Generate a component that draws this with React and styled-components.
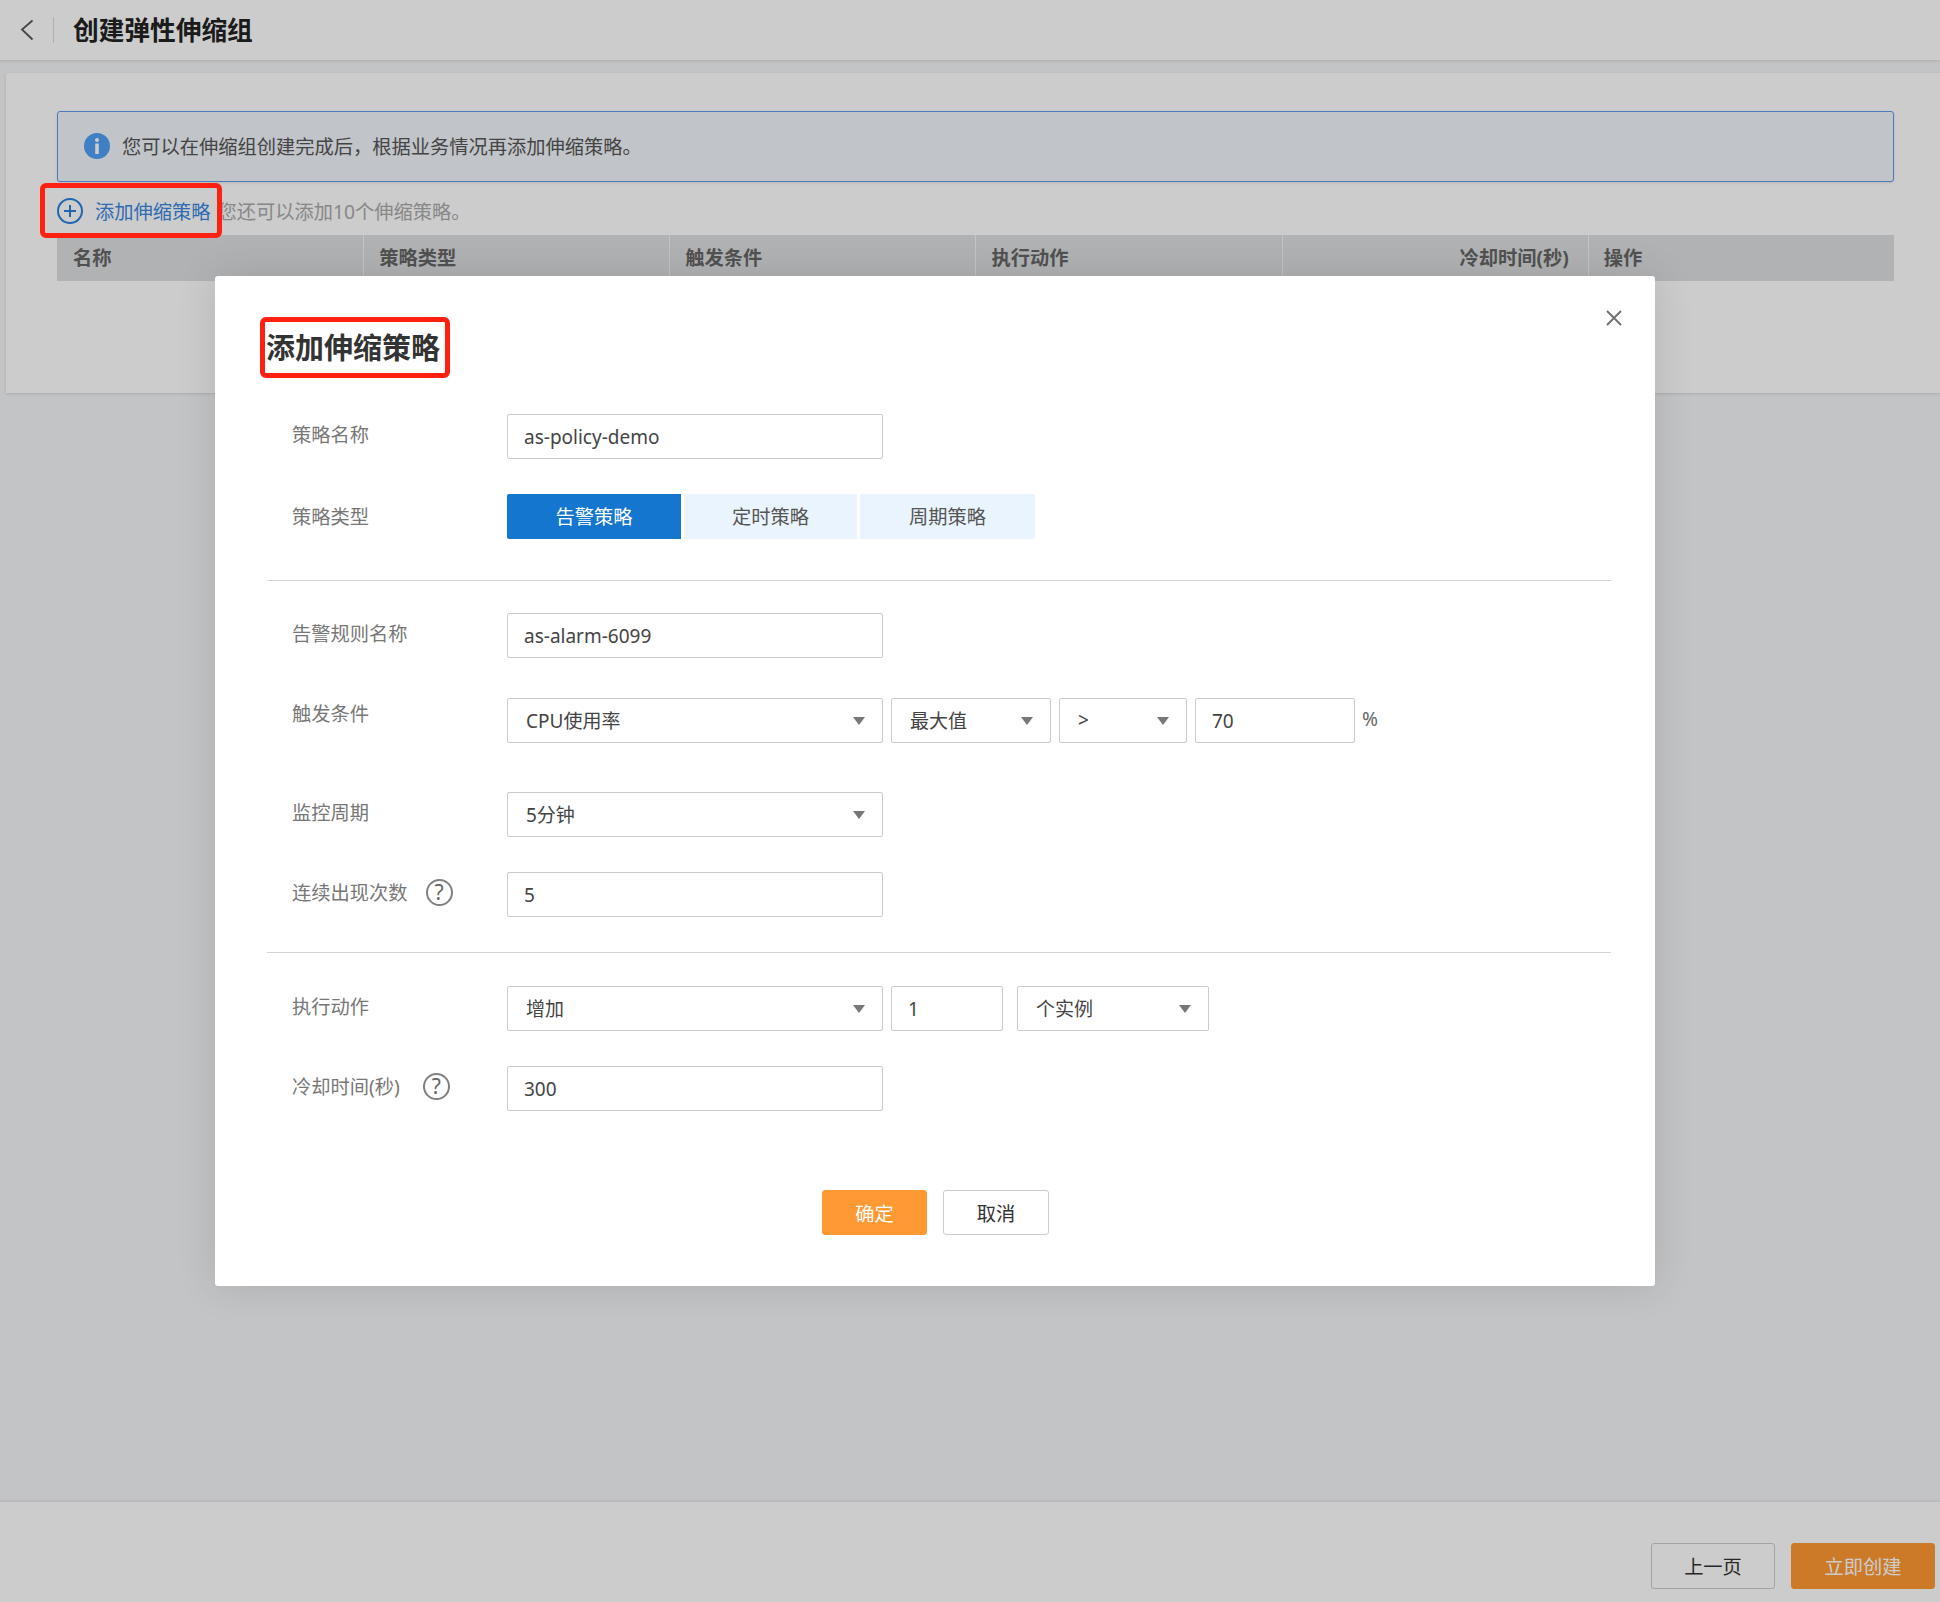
import React from 'react';
import styled, { createGlobalStyle } from 'styled-components';

const Global = createGlobalStyle`
  html, body { margin: 0; padding: 0; background: #f4f5f7; }
  body { font-family: "Noto Sans", "Noto Sans CJK SC", sans-serif; font-size: 19.25px; color: #444; }
  * { box-sizing: border-box; }
`;

const Page = styled.div`
  position: relative;
  width: 1940px;
  height: 1602px;
  display: flex;
  flex-direction: column;
  overflow: hidden;
  background: #f4f5f7;
`;
const Header = styled.header`
  height: 60px;
  flex: none;
  background: #fff;
  display: flex;
  align-items: center;
  box-shadow: 0 1px 3px rgba(0,0,0,.12);
  padding-left: 18px;
`;
const BackDivider = styled.span`
  width: 1px;
  height: 26px;
  background: #ddd;
  margin: 0 19px 0 17px;
`;
const PageTitle = styled.h1`
  margin: 2px 0 0;
  font-size: 25.7px;
  font-weight: 700;
  color: #222;
  line-height: 1;
`;
const Panel = styled.section`
  margin: 13px 0 0 6px;
  height: 320px;
  flex: none;
  background: #fff;
  padding: 38px 46px 0 51px;
  box-shadow: 0 1px 3px rgba(0,0,0,.12);
`;
const InfoBox = styled.div`
  height: 71px;
  display: flex;
  align-items: center;
  gap: 12px;
  padding: 0 0 2px 26px;
  background: #f2f6fc;
  border: 1px solid #5d9ced;
  border-radius: 3px;
  box-shadow: 0 1px 3px rgba(0,0,0,.1);
  color: #555;
`;
const Toolbar = styled.div`
  height: 53px;
  display: flex;
  align-items: center;
  padding-top: 5px;
`;
const AddLink = styled.a`
  position: relative;
  display: flex;
  align-items: center;
  gap: 12px;
  color: #3a86e0;
`;
const Marker = styled.span`
  position: absolute;
  left: -17px;
  top: -14px;
  width: 182px;
  height: 55px;
  border: 5px solid #ff2011;
  border-radius: 6px;
  z-index: 30;
`;
const Hint = styled.span`
  color: #aaa;
  margin-left: 7px;
`;
const TableHead = styled.div`
  display: grid;
  grid-template-columns: repeat(6, 1fr);
  height: 46px;
  background: #dcdfe1;
`;
const HeadCell = styled.div`
  display: flex;
  align-items: center;
  padding: 0 ${p => (p.$right ? '19px' : '16px')} 2px ${p => (p.$first ? '16px' : '15px')};
  font-weight: 700;
  color: #666;
  border-left: ${p => (p.$first ? 'none' : '1px solid #f4f5f7')};
  justify-content: ${p => (p.$right ? 'flex-end' : 'flex-start')};
`;
const Spacer = styled.div`
  flex: 1;
`;
const Footer = styled.footer`
  height: 100px;
  flex: none;
  background: #fff;
  box-shadow: 0 -1px 3px rgba(0,0,0,.1);
  display: flex;
  justify-content: flex-end;
  gap: 16px;
  padding: 41px 5px 0 0;
`;
const Button = styled.button`
  width: ${p => p.$w}px;
  height: ${p => p.$h}px;
  font: inherit;
  padding: 0;
  border-radius: 3px;
  cursor: pointer;
  color: ${p => (p.$primary ? '#fff' : '#333')};
  background: ${p => (p.$primary ? '#ff9933' : '#fff')};
  border: 1px solid ${p => (p.$primary ? '#ff9933' : '#ccc')};
`;
const Overlay = styled.div`
  position: absolute;
  inset: 0;
  background: rgba(0,0,0,.2);
  z-index: 10;
`;
const Modal = styled.div`
  position: absolute;
  left: 215px;
  top: 276px;
  width: 1440px;
  height: 1010px;
  background: #fff;
  border-radius: 3px;
  padding: 41px 44px 0 45px;
  box-shadow: 0 0 40px rgba(0,0,0,.12);
  z-index: 20;
`;
const CloseBtn = styled.span`
  position: absolute;
  top: 33px;
  right: 32px;
  width: 18px;
  height: 18px;
  display: block;
  line-height: 0;
`;
const ModalTitle = styled.h2`
  margin: 0;
  display: block;
  width: 190px;
  height: 61px;
  border: 5px solid #ff2011;
  border-radius: 6px;
  font-size: 29px;
  font-weight: 700;
  color: #333;
  line-height: 51px;
  white-space: nowrap;
  padding-left: 1px;
`;
const Row = styled.div`
  display: flex;
  align-items: flex-start;
  margin-top: ${p => p.$top}px;
  padding-left: 32px;
`;
const Label = styled.div`
  width: 215px;
  flex: none;
  display: flex;
  align-items: center;
  color: #777;
  height: ${p => p.$lh || 42}px;
  line-height: ${p => p.$lh || 42}px;
  white-space: nowrap;
`;
const Help = styled.span`
  width: 27px;
  height: 27px;
  flex: none;
  margin-left: ${p => p.$gap}px;
  margin-top: -2px;
  border: 2px solid #808080;
  border-radius: 50%;
  display: flex;
  align-items: center;
  justify-content: center;
  font-size: 21px;
  line-height: 1;
  color: #666;
`;
const Controls = styled.div`
  display: flex;
  align-items: center;
`;
const Field = styled.div`
  width: ${p => p.$w}px;
  margin-left: ${p => p.$gap || 0}px;
  height: 45px;
  flex: none;
  display: flex;
  align-items: center;
  padding-left: 16px;
  font-size: 19px;
  background: #fff;
  border: 1px solid #ccc;
  border-bottom-width: 1.5px;
  border-radius: 2px;
  color: #444;
`;
const SelectBox = styled(Field)`
  position: relative;
  padding: 0 0 2px 18px;
  &::after {
    content: '';
    position: absolute;
    right: 17px;
    top: 18px;
    border-left: 6px solid transparent;
    border-right: 6px solid transparent;
    border-top: 8px solid #777;
  }
`;
const Unit = styled.span`
  margin: 0 0 4px 7px;
  color: #666;
`;
const SegGroup = styled.div`
  display: flex;
  gap: 3px;
`;
const Seg = styled.div`
  width: ${p => p.$w}px;
  height: 45px;
  display: flex;
  align-items: center;
  justify-content: center;
  padding-bottom: 2px;
  color: ${p => (p.$active ? '#fff' : '#555')};
  background: ${p => (p.$active ? '#1476ce' : '#eaf4fe')};
  border-radius: ${p => p.$radius || '0'};
`;
const Divider = styled.hr`
  margin: ${p => p.$top}px 0 0 7px;
  border: 0;
  height: 1px;
  background: #d4d4d4;
`;
const ModalActions = styled.div`
  display: flex;
  margin-top: 79px;
  padding-left: 562px;
  gap: 16px;
`;

const Chevron = () => (
  <svg width="18" height="26" viewBox="0 0 18 26" fill="none" stroke="#555" strokeWidth="1.8">
    <path d="M14.5 3.5 L4 12.5 L14.5 22.5" />
  </svg>
);
const InfoIcon = () => (
  <svg width="26" height="26" viewBox="0 0 26 26">
    <circle cx="13" cy="13" r="13" fill="#4f9ff5" />
    <circle cx="13" cy="7" r="2" fill="#fff" />
    <rect x="11.2" y="10.5" width="3.6" height="10.5" fill="#fff" />
  </svg>
);
const PlusIcon = () => (
  <svg width="26" height="26" viewBox="0 0 26 26" fill="none" stroke="#2b7fdc" strokeWidth="2">
    <circle cx="13" cy="13" r="12" />
    <path d="M13 7 V19 M7 13 H19" />
  </svg>
);
const CloseIcon = () => (
  <svg width="18" height="18" viewBox="0 0 18 18" fill="none" stroke="#6e6e6e" strokeWidth="1.8">
    <path d="M2 2 L16 16 M16 2 L2 16" />
  </svg>
);

export default function App() {
  return (
    <Page>
      <Global />
      <Header>
        <Chevron />
        <BackDivider />
        <PageTitle>创建弹性伸缩组</PageTitle>
      </Header>
      <Panel>
        <InfoBox>
          <InfoIcon />
          <span>您可以在伸缩组创建完成后，根据业务情况再添加伸缩策略。</span>
        </InfoBox>
        <Toolbar>
          <AddLink>
            <PlusIcon />
            <span>添加伸缩策略</span>
            <Marker />
          </AddLink>
          <Hint>您还可以添加10个伸缩策略。</Hint>
        </Toolbar>
        <TableHead>
          <HeadCell $first>名称</HeadCell>
          <HeadCell>策略类型</HeadCell>
          <HeadCell>触发条件</HeadCell>
          <HeadCell>执行动作</HeadCell>
          <HeadCell $right>冷却时间(秒)</HeadCell>
          <HeadCell>操作</HeadCell>
        </TableHead>
      </Panel>
      <Spacer />
      <Footer>
        <Button $w={124} $h={46}>上一页</Button>
        <Button $w={144} $h={46} $primary>立即创建</Button>
      </Footer>
      <Overlay />
      <Modal>
        <CloseBtn><CloseIcon /></CloseBtn>
        <ModalTitle>添加伸缩策略</ModalTitle>
        <Row $top={36}>
          <Label>策略名称</Label>
          <Controls><Field $w={376}>as-policy-demo</Field></Controls>
        </Row>
        <Row $top={35}>
          <Label $lh={45}>策略类型</Label>
          <SegGroup>
            <Seg $w={174} $active $radius="2px 0 0 2px">告警策略</Seg>
            <Seg $w={173}>定时策略</Seg>
            <Seg $w={175} $radius="0 2px 2px 0">周期策略</Seg>
          </SegGroup>
        </Row>
        <Divider $top={41} />
        <Row $top={32}>
          <Label>告警规则名称</Label>
          <Controls><Field $w={376}>as-alarm-6099</Field></Controls>
        </Row>
        <Row $top={40}>
          <Label $lh={32}>触发条件</Label>
          <Controls>
            <SelectBox $w={376}>CPU使用率</SelectBox>
            <SelectBox $w={160} $gap={8}>最大值</SelectBox>
            <SelectBox $w={128} $gap={8}>&gt;</SelectBox>
            <Field $w={160} $gap={8}>70</Field>
            <Unit>%</Unit>
          </Controls>
        </Row>
        <Row $top={49}>
          <Label>监控周期</Label>
          <Controls><SelectBox $w={376}>5分钟</SelectBox></Controls>
        </Row>
        <Row $top={35}>
          <Label>连续出现次数<Help $gap={18}>?</Help></Label>
          <Controls><Field $w={376}>5</Field></Controls>
        </Row>
        <Divider $top={35} />
        <Row $top={33}>
          <Label>执行动作</Label>
          <Controls>
            <SelectBox $w={376}>增加</SelectBox>
            <Field $w={112} $gap={8}>1</Field>
            <SelectBox $w={192} $gap={14}>个实例</SelectBox>
          </Controls>
        </Row>
        <Row $top={35}>
          <Label>冷却时间(秒)<Help $gap={23}>?</Help></Label>
          <Controls><Field $w={376}>300</Field></Controls>
        </Row>
        <ModalActions>
          <Button $w={105} $h={45} $primary>确定</Button>
          <Button $w={106} $h={45}>取消</Button>
        </ModalActions>
      </Modal>
    </Page>
  );
}
